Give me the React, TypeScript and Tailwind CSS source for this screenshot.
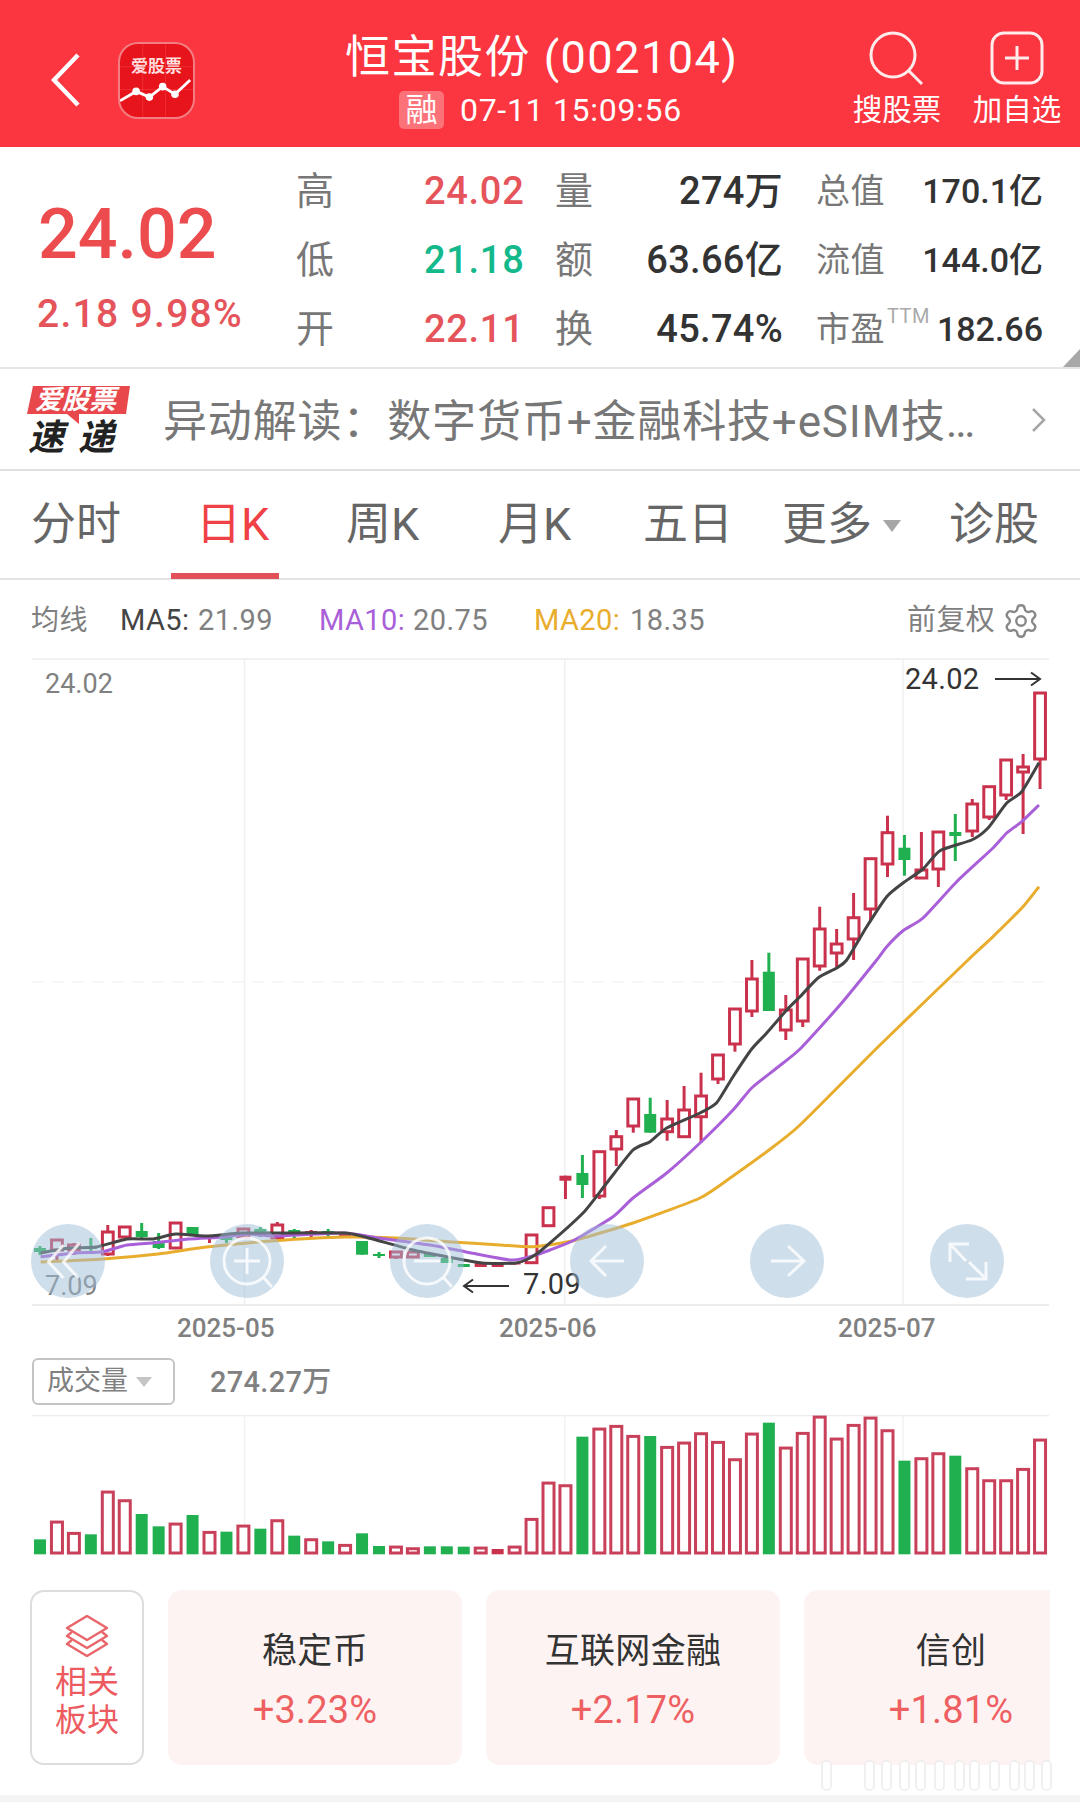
import { Settings } from 'lucide-react';

const STEP = 16.95;
const cx = (i: number) => 40 + i * STEP;

// [body top, body bottom, wick top, wick bottom, filled]
const candles: [number, number, number, number, number?][] = [
  [1248, 1252, 1246, 1255], [1240, 1250, 1240, 1262], [1245, 1250, 1243, 1255], [1246, 1249, 1238, 1251],
  [1232, 1254, 1225, 1256], [1227, 1237, 1227, 1237], [1231, 1237, 1223, 1238], [1241, 1248, 1233, 1249],
  [1223, 1248, 1223, 1248], [1227, 1236, 1227, 1236], [1236, 1237, 1235, 1243, 1], [1237, 1240, 1236, 1243],
  [1229, 1237, 1229, 1237], [1229, 1234, 1227, 1237], [1225, 1238, 1222, 1240], [1230, 1233, 1229, 1238],
  [1231, 1233, 1230, 1237, 1], [1231, 1233, 1229, 1238], [1234, 1238, 1234, 1238, 1], [1241, 1254.7, 1241, 1254.7],
  [1254, 1256, 1252, 1258], [1252, 1257, 1252, 1259], [1252, 1257, 1252, 1257], [1254, 1257, 1254, 1257],
  [1258, 1263, 1258, 1263], [1264, 1267, 1264, 1267], [1262, 1267, 1262, 1267, 1], [1263, 1267, 1263, 1267, 1],
  [1262, 1264.5, 1262, 1264.5, 1], [1235, 1262.7, 1235, 1264], [1207.7, 1225.7, 1207.7, 1227],
  [1175.7, 1180.7, 1175.7, 1199, 1], [1173, 1185, 1155, 1198], [1151.7, 1196, 1151.7, 1199],
  [1136.7, 1149, 1130, 1166], [1099, 1126, 1099, 1132.7], [1114, 1132.7, 1097.7, 1132.7],
  [1119, 1131.7, 1100, 1140.7], [1110, 1136.7, 1086, 1136.7], [1096, 1116.7, 1072.7, 1143],
  [1055, 1079, 1055, 1084], [1009, 1044, 1009, 1051.7], [979, 1011, 960, 1017], [971.7, 1011, 952.7, 1011],
  [1010, 1030, 995, 1040], [959, 1021, 959, 1027], [929, 966, 906.7, 970.7], [944, 953, 929, 967],
  [917.7, 939, 893, 960], [858.7, 909, 858.7, 920], [832.7, 864, 815.7, 877], [847.7, 860, 835, 875.7],
  [870, 878, 832, 878], [832, 869, 832, 887], [832, 836, 814, 861], [804, 831, 799, 837],
  [786.7, 817, 786.7, 820], [760, 795, 760, 800], [767, 772, 754, 834], [693, 759, 693, 789],
];

const greens = [0, 3, 6, 7, 9, 11, 13, 15, 17, 19, 20, 23, 24, 25, 32, 36, 43, 51, 54];

const volumes = [
  1168, 1112, 1146, 1153, 1022, 1048, 1092, 1129, 1118, 1095, 1143, 1145, 1124, 1136, 1108, 1157, 1165, 1174, 1182, 1150,
  1188, 1187, 1192, 1189, 1189, 1190, 1190, 1197, 1187, 1104, 995, 1003, 860, 833, 825, 855, 858, 888, 875, 847, 873, 925,
  848, 818, 890, 846, 797, 863, 822, 800, 838, 932, 922, 907, 917, 952, 988, 988, 954, 866,
];

const ma5 =
  '40.6,1253 69,1248 96,1247 127,1239 153,1239 175.6,1234 206,1236 241,1233 275,1233 344,1233 365,1237 413,1250 448,1257 482,1263 516,1263 530,1258 541.7,1250 583,1213 606.7,1183 633,1150 650,1141.7 666.7,1128 700,1113 716.7,1102.7 733,1076.7 751.7,1049 766.7,1033 786.7,1010 800,996.7 818,978 836.7,968 846.7,960 866.7,926.7 886.7,896.7 903,883 923,869 940,850.7 971.7,840 988,828 1006.7,803 1021.7,791.7 1039,762.7';
const ma10 =
  '40.6,1256.7 75.8,1253 103,1251.7 127,1245 155,1242.7 189,1239 224,1237 248,1234 275,1236 344,1233 379,1238 430,1245 465,1251.7 510,1260 530,1256.7 550,1250 574.4,1240 613,1216.7 633,1198 666.7,1173 700,1143 733,1110 751.7,1088 776.7,1068 800,1049 840,1005 876.7,960 886.7,946.7 903,930.7 923,918 956.7,881.7 993,848 1006.7,833 1021.7,821.7 1039,805';
const ma20 =
  '40.6,1262 103,1259 158,1254 206.6,1247 275,1240.7 344,1237 396,1238 448,1241.7 500,1245 533,1246.7 573,1240.7 633,1223 700,1198 733,1176 766.7,1151.7 800,1125 880,1045 968,960 993,936.7 1023,906.7 1039,886.7';

// 折线点转平滑曲线
function smooth(points: string) {
  const p = points.split(' ').map((s) => s.split(',').map(Number));
  let d = `M${p[0][0]} ${p[0][1]}`;
  for (let i = 0; i < p.length - 1; i++) {
    const a = p[Math.max(i - 1, 0)];
    const b = p[i];
    const c = p[i + 1];
    const e = p[Math.min(i + 2, p.length - 1)];
    d += `C${b[0] + (c[0] - a[0]) / 10} ${b[1] + (c[1] - a[1]) / 10} ${c[0] - (e[0] - b[0]) / 10} ${c[1] - (e[1] - b[1]) / 10} ${c[0]} ${c[1]}`;
  }
  return d;
}

const VLINES = [244.5, 564.8, 903];
const font = "[font-family:Roboto,'Noto_Sans_CJK_SC',sans-serif]";

function KChart() {
  return (
    <svg viewBox="0 658 1080 648" className="w-full h-full block">
      <line x1="32" x2="1049" y1="659" y2="659" stroke="#ececec" strokeWidth="1.5" />
      <line x1="32" x2="1049" y1="1305" y2="1305" stroke="#e6e6e6" strokeWidth="1.5" />
      <line x1="32" x2="1049" y1="982" y2="982" stroke="#f3f3f3" strokeWidth="1.5" strokeDasharray="12 8" />
      {VLINES.map((x) => (
        <line key={x} x1={x} x2={x} y1="659" y2="1305" stroke="#f0f0f0" strokeWidth="1.5" />
      ))}
      {candles.map(([t, b, h, l, filled], i) => {
        const green = greens.includes(i);
        const c = green ? '#20b04f' : '#c9314c';
        return (
          <g key={i}>
            <line x1={cx(i)} x2={cx(i)} y1={h} y2={l} stroke={c} strokeWidth="3" />
            {green || filled ? (
              <rect x={cx(i) - 6} y={t} width="12" height={b - t} fill={c} />
            ) : (
              <rect x={cx(i) - 5.4} y={t} width="10.8" height={b - t} fill="#fff" stroke={c} strokeWidth="3" />
            )}
          </g>
        );
      })}
      <path d={smooth(ma20)} fill="none" stroke="#e9ad2e" strokeWidth="3" />
      <path d={smooth(ma10)} fill="none" stroke="#a95fd8" strokeWidth="3" />
      <path d={smooth(ma5)} fill="none" stroke="#444444" strokeWidth="3" />
      {/* price arrows */}
      <path d="M995 679H1040M1031 672.5L1040 679L1031 685.5" fill="none" stroke="#333" strokeWidth="2" />
      <path d="M509 1286H464M473 1279.5L464 1286L473 1292.5" fill="none" stroke="#333" strokeWidth="2" />
    </svg>
  );
}

function VolumeChart() {
  return (
    <svg viewBox="0 1415 1080 141" className="w-full h-full block">
      <line x1="32" x2="1049" y1="1415.5" y2="1415.5" stroke="#ececec" strokeWidth="1.5" />
      {VLINES.map((x) => (
        <line key={x} x1={x} x2={x} y1="1415" y2="1554" stroke="#f2f2f2" strokeWidth="1.5" />
      ))}
      {volumes.map((z, i) => {
        const top = 1150 + z / 3;
        const green = greens.includes(i);
        return green || i === 27 ? (
          <rect key={i} x={cx(i) - 6} y={top} width="12" height={1554.3 - top} fill={green ? '#20b04f' : '#c9314c'} />
        ) : (
          <rect
            key={i}
            x={cx(i) - 5.5}
            y={top + 1.4}
            width="11"
            height={1553 - top - 1.4}
            fill="#fff"
            stroke="#c9405a"
            strokeWidth="3"
          />
        );
      })}
    </svg>
  );
}

function ChartButton({ left, children }: { left: string; children: React.ReactNode }) {
  return (
    <div className={`absolute top-[566px] ${left} w-[74px] h-[74px] rounded-full bg-[#a0bed7]/50`}>
      <svg viewBox="0 0 74 74" className="w-full h-full" fill="none" stroke="#fff" strokeOpacity="0.8" strokeWidth="3">
        {children}
      </svg>
    </div>
  );
}

function StatRow({ label, value, color, name, val }: { label: string; value: string; color: string; name: string; val: string }) {
  return (
    <div className="flex items-center h-[69px]">
      <span className="w-[128px] text-[38px] text-[#777777] leading-none">{label}</span>
      <span className={`w-[98px] text-[38px] leading-none font-medium tracking-[0.7px] whitespace-nowrap ${color}`}>{value}</span>
      <span className="ml-[33px] w-[38px] text-[38px] text-[#777777] leading-none">{name}</span>
      <span className="w-[190px] text-right text-[38px] leading-none font-medium tracking-[0.3px] text-[#333333] whitespace-nowrap">{val}</span>
    </div>
  );
}

function Card({ title, pct }: { title: string; pct: string }) {
  return (
    <div className="w-[294px] h-[175px] shrink-0 rounded-[14px] bg-[#fef3f3] flex flex-col items-center pt-[40px]">
      <span className="text-[35px] leading-[44px] text-[#333333] tracking-[0.3px]">{title}</span>
      <span className="mt-[14px] text-[38px] leading-[44px] text-[#ee5f62] tracking-[0.2px]">{pct}</span>
    </div>
  );
}

export default function App() {
  return (
    <div className={`${font} w-[1080px] h-[1802px] bg-white flex flex-col overflow-hidden relative`}>
      {/* 顶部红色标题栏 */}
      <header className="h-[147px] shrink-0 bg-[#fb3640] flex text-white relative">
        <svg viewBox="0 0 30 54" className="w-[30px] h-[54px] ml-[51px] mt-[53px]" fill="none" stroke="#fff" strokeWidth="4.5">
          <path d="M27 2L3 27L27 52" />
        </svg>
        <div className="ml-[37px] mt-[42px] w-[77px] h-[77px] rounded-[20px] bg-[#e8141c] border-[2.5px] border-white/45 relative overflow-hidden">
          <span className="absolute top-[12px] left-0 right-0 text-center text-[17px] leading-[20px] font-bold text-[#ffdede]">爱股票</span>
          <svg viewBox="0 0 77 77" className="absolute inset-0 w-full h-full" fill="#fff" stroke="#fff" strokeWidth="3">
            <path d="M24 0V77M48 0V77M0 24H77M0 48H77" fill="none" stroke="#ff5a5f" strokeOpacity="0.35" strokeWidth="1" />
            <polyline fill="none" points="0,60 17,50 31,56 45,45 58,53 74,38" />
            <circle cx="17" cy="50" r="2.5" />
            <circle cx="31" cy="56" r="2.5" />
            <circle cx="45" cy="45" r="2.5" />
            <circle cx="58" cy="53" r="2.5" />
          </svg>
        </div>
        <div className="absolute left-[345px] top-[30px] flex flex-col">
          <span className="text-[45px] leading-[56px] tracking-[1.5px] whitespace-nowrap">恒宝股份 (002104)</span>
          <div className="flex items-center mt-[5px] ml-[54px]">
            <span className="w-[45px] h-[38px] rounded-[5px] bg-white/30 text-[32px] leading-[38px] text-center">融</span>
            <span className="ml-[16px] text-[32px] leading-[38px] tracking-[0.7px] whitespace-nowrap">07-11 15:09:56</span>
          </div>
        </div>
        <div className="absolute left-[853px] top-[30px] flex flex-col items-center w-[88px]">
          <svg viewBox="0 0 56 56" className="w-[56px] h-[56px]" fill="none" stroke="#fff" strokeOpacity="0.9" strokeWidth="3">
            <circle cx="24" cy="25" r="22" />
            <path d="M40 41L53 54" />
          </svg>
          <span className="text-[29.5px] leading-[38px] mt-[5px] whitespace-nowrap">搜股票</span>
        </div>
        <div className="absolute left-[973px] top-[30px] flex flex-col items-center w-[88px]">
          <svg viewBox="0 0 56 56" className="w-[56px] h-[56px]" fill="none" stroke="#fff" strokeOpacity="0.9" strokeWidth="3">
            <rect x="3" y="3" width="50" height="50" rx="12" />
            <path d="M28 16V40M16 28H40" />
          </svg>
          <span className="text-[29.5px] leading-[38px] mt-[5px] whitespace-nowrap">加自选</span>
        </div>
      </header>

      {/* 行情数据 */}
      <section className="h-[222px] shrink-0 border-b-2 border-[#e5e5e5] flex relative">
        <div className="w-[296px] pl-[38px] pt-[45px]">
          <div className="text-[70px] leading-[84px] font-medium text-[#ed4c4f]">24.02</div>
          <div className="text-[39px] leading-[48px] mt-[14px] -ml-[1px] font-medium text-[#e5545a] tracking-[1.3px] whitespace-nowrap">2.18 9.98%</div>
        </div>
        <div className="pt-[9px]">
          <StatRow label="高" value="24.02" color="text-[#e5545a]" name="量" val="274万" />
          <StatRow label="低" value="21.18" color="text-[#13b98a]" name="额" val="63.66亿" />
          <StatRow label="开" value="22.11" color="text-[#e5545a]" name="换" val="45.74%" />
        </div>
        <div className="ml-[33px] w-[227px] pt-[9px] text-[34px] leading-none">
          {[
            ['总值', '170.1亿'],
            ['流值', '144.0亿'],
            ['市盈', '182.66'],
          ].map(([k, v], i) => (
            <div key={k} className="flex items-center justify-between h-[69px]">
              <span className="text-[#777777] relative tracking-[0.5px]">
                {k}
                {i === 2 && <span className="absolute left-[71px] top-[-6px] text-[20px] text-[#aaaaaa]">TTM</span>}
              </span>
              <span className="font-medium text-[#333333] whitespace-nowrap">{v}</span>
            </div>
          ))}
        </div>
        <svg viewBox="0 0 17 18" className="absolute right-0 bottom-0 w-[17px] h-[18px]">
          <polygon points="0,18 17,0 17,18" fill="#a8a8a8" />
        </svg>
      </section>

      {/* 异动解读 */}
      <section className="h-[102px] shrink-0 border-b-2 border-[#e0e0e0] flex items-center relative">
        <div className="relative ml-[27px] w-[104px] h-[68px] shrink-0">
          <svg viewBox="0 0 104 42" className="absolute top-0 left-0 w-[104px] h-[42px]">
            <polygon points="6,1 103,1 99,29 52,29 52,39 40,29 0,29" fill="#e8474c" />
          </svg>
          <span className="absolute top-[1px] left-[8px] text-[27px] leading-[28px] font-bold italic text-white whitespace-nowrap">爱股票</span>
          <span className="absolute top-[35px] left-[1px] text-[36px] leading-[36px] font-bold italic text-[#222222] tracking-[14px] whitespace-nowrap">速递</span>
        </div>
        <span className="ml-[32px] mt-[5px] text-[44px] leading-none text-[#777777] tracking-[0.85px] whitespace-nowrap">异动解读：数字货币+金融科技+eSIM技…</span>
        <svg viewBox="0 0 16 26" className="absolute left-[1031px] top-[38px] w-[16px] h-[26px]" fill="none" stroke="#a6a6a6" strokeWidth="2.5">
          <path d="M2 2L13 13L2 24" />
        </svg>
      </section>

      {/* 周期切换 */}
      <nav className="h-[109px] shrink-0 border-b-2 border-[#e3e3e3] relative flex items-start pt-[32px] text-[45px] leading-[44px] text-[#666666] whitespace-nowrap">
        <span className="ml-[31px] w-[165px]">分时</span>
        <span className="w-[150px] text-[#ef4146]">日K</span>
        <span className="w-[152px]">周K</span>
        <span className="w-[145px]">月K</span>
        <span className="w-[139px]">五日</span>
        <span className="w-[167px] relative">
          更多
          <svg viewBox="0 0 20 14" className="absolute left-[100px] top-[16px] w-[20px] h-[14px]">
            <polygon points="1,1 19,1 10,13" fill="#a6a6a6" />
          </svg>
        </span>
        <span>诊股</span>
        <span className="absolute left-[171px] bottom-[-1px] w-[108px] h-[6px] bg-[#e2505a]" />
      </nav>

      {/* 均线 */}
      <div className="h-[78px] shrink-0 flex items-center pt-[3px] text-[29px] leading-none text-[#808080] whitespace-nowrap tracking-[0.4px]">
        <span className="ml-[31px] w-[89px] text-[28px]">均线</span>
        <span className="text-[#444444] w-[78px]">MA5:</span>
        <span className="w-[121px]">21.99</span>
        <span className="text-[#a95fd8] w-[94px]">MA10:</span>
        <span className="w-[121px]">20.75</span>
        <span className="text-[#e9ad2e] w-[96px]">MA20:</span>
        <span className="w-[277px]">18.35</span>
        <span className="text-[29px]">前复权</span>
        <Settings className="ml-[7px] w-[38px] h-[38px] text-[#888888]" strokeWidth={1.5} />
      </div>

      {/* K线图 */}
      <div className="h-[648px] shrink-0 relative">
        <KChart />
        <span className="absolute left-[45px] top-[10px] text-[27px] leading-[32px] text-[#808080]">24.02</span>
        <span className="absolute left-[905px] top-[5px] text-[29px] leading-[32px] text-[#333333] tracking-[0.3px]">24.02</span>
        <span className="absolute left-[45px] top-[612px] text-[27px] leading-[32px] text-[#808080]">7.09</span>
        <span className="absolute left-[523px] top-[610px] text-[29px] leading-[32px] text-[#333333] tracking-[0.4px]">7.09</span>
        <ChartButton left="left-[30.5px]">
          <path d="M32.5 21L17.5 38L32.5 54M48.5 19L32.5 38L47.5 54" />
        </ChartButton>
        <ChartButton left="left-[210px]">
          <circle cx="37" cy="37" r="23" />
          <path d="M53.5 53.5L62 63M24 37H50M37 24V50" />
        </ChartButton>
        <ChartButton left="left-[390px]">
          <circle cx="37" cy="37" r="23" />
          <path d="M53.5 53.5L62 63M24 37H50" />
        </ChartButton>
        <ChartButton left="left-[570px]">
          <path d="M21 37H54M36 22L21 37L36 52" />
        </ChartButton>
        <ChartButton left="left-[750px]">
          <path d="M21 37H54M38 22L54 37L38 52" />
        </ChartButton>
        <ChartButton left="left-[930px]">
          <path d="M39 20H20V38M20 20L36 37M36 55H56V38M56 55L39 38" />
        </ChartButton>
      </div>

      {/* 日期轴 */}
      <div className="h-[44px] shrink-0 flex items-center text-[26px] leading-none font-medium text-[#808080]">
        <span className="ml-[177px] w-[322px]">2025-05</span>
        <span className="w-[339px]">2025-06</span>
        <span>2025-07</span>
      </div>

      {/* 成交量 */}
      <div className="h-[65px] shrink-0 flex items-start pt-[8px]">
        <div className="ml-[32px] w-[143px] h-[47px] border-2 border-[#c4c4c4] rounded-[6px] flex items-center pl-[13px]">
          <span className="text-[27px] leading-none text-[#808080]">成交量</span>
          <svg viewBox="0 0 16 10" className="ml-[8px] w-[16px] h-[10px]">
            <polygon points="0,0 16,0 8,10" fill="#c5c5c5" />
          </svg>
        </div>
        <span className="ml-[35px] mt-[8px] text-[29px] leading-[32px] font-medium text-[#808080] tracking-[0.3px]">274.27万</span>
      </div>
      <div className="h-[141px] shrink-0">
        <VolumeChart />
      </div>

      {/* 相关板块 */}
      <div className="mt-[34px] ml-[30px] w-[1020px] flex gap-[24px] overflow-hidden shrink-0">
        <div className="w-[114px] h-[175px] shrink-0 border-2 border-[#dddddd] rounded-[14px] flex flex-col items-center pt-[23px] text-[32px] leading-[38px] text-[#ec5b5f]">
          <svg viewBox="0 0 44 42" className="w-[44px] h-[42px] mb-[6px]" fill="none" stroke="#e8656a" strokeWidth="2.4" strokeLinejoin="round">
            <path d="M22 1L42 13L22 25L2 13Z" />
            <path d="M7 17L2 21L22 33L42 21L37 17" />
            <path d="M7 25L2 29L22 41L42 29L37 25" />
          </svg>
          <span>相关</span>
          <span>板块</span>
        </div>
        <Card title="稳定币" pct="+3.23%" />
        <Card title="互联网金融" pct="+2.17%" />
        <Card title="信创" pct="+1.81%" />
      </div>

      {/* 右下角水印 */}
      <svg viewBox="0 0 240 32" className="absolute left-[820px] top-[1760px] w-[240px] h-[32px]" fill="#ffffff" stroke="#ececec" strokeWidth="1.5">
        {[2, 45, 62, 80, 96, 115, 135, 150, 170, 190, 205, 222].map((x) => (
          <rect key={x} x={x} y="1" width="9" height="29" rx="4" />
        ))}
      </svg>

      <div className="absolute left-0 right-0 bottom-0 h-[7px] bg-[#f4f4f4]" />
    </div>
  );
}
